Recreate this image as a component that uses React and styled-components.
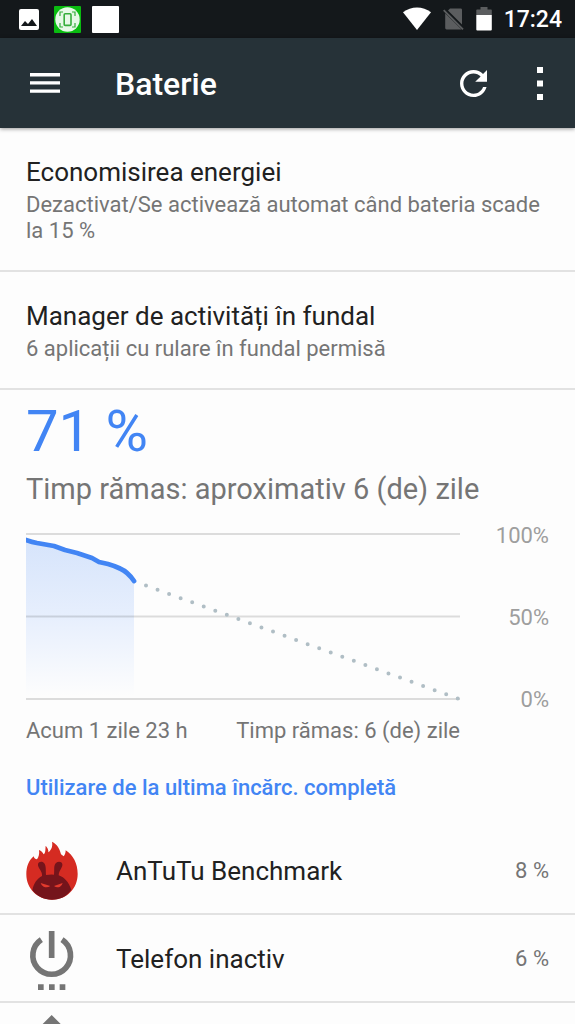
import React from "react";
import styled, { createGlobalStyle } from "styled-components";

const GlobalStyle = createGlobalStyle`
  * {
    box-sizing: border-box;
  }
  body {
    margin: 0;
    background: #fdfdfd;
    font-family: Roboto, "Noto Sans", sans-serif;
  }
  button {
    border: none;
    background: none;
    padding: 0;
    color: inherit;
    font: inherit;
    text-align: left;
    cursor: pointer;
  }
  svg {
    display: block;
  }
`;

const Screen = styled.div`
  height: 100vh;
  display: flex;
  flex-direction: column;
  overflow: hidden;
`;

const StatusBar = styled.div`
  flex: none;
  height: 38px;
  padding: 0 13px 0 16px;
  display: flex;
  align-items: center;
  justify-content: space-between;
  background: #14181b;
  color: #fff;
`;

const StatusGroup = styled.div`
  display: flex;
  align-items: center;
  gap: ${(props) => props.$gap}px;
`;

const Clock = styled.time`
  padding-top: 2px;
  font-size: 23px;
  font-weight: 500;
  line-height: 36px;
`;

const AppBar = styled.header`
  flex: none;
  z-index: 1;
  height: 90px;
  padding: 0 20px;
  display: flex;
  align-items: center;
  background: #263238;
  color: #fff;
  box-shadow: 0 1px 4px rgba(0, 0, 0, 0.4);
`;

const IconButton = styled.button`
  flex: none;
  width: ${(props) => props.$width || 50}px;
  height: 50px;
  display: grid;
  place-items: center;
`;

const Title = styled.h1`
  flex: 1;
  margin: 0;
  padding: 2px 0 0 45px;
  font-size: 32px;
  font-weight: 500;
  line-height: 36px;
`;

const Actions = styled.div`
  display: flex;
  gap: 27px;
`;

const Content = styled.main`
  flex: 1;
  min-height: 0;
  overflow-y: auto;
  scrollbar-width: none;
`;

const Preference = styled.button`
  display: block;
  width: 100%;
  padding: 28px 26px 26px;
  border-bottom: 2px solid #e2e2e2;
`;

const PreferenceTitle = styled.span`
  display: block;
  margin-bottom: 4px;
  color: #212121;
  font-size: 26px;
  line-height: 32px;
`;

const Summary = styled.span`
  display: block;
  color: #757575;
  font-size: 22px;
  line-height: 26px;
`;

const Battery = styled.section`
  padding: 9px 26px 0;
`;

const Level = styled.div`
  color: #4285f4;
  font-size: 58px;
  line-height: 64px;
`;

const Remaining = styled.div`
  margin-top: 10px;
  color: #757575;
  font-size: 29px;
  line-height: 32px;
`;

const Chart = styled.div`
  margin-top: 18px;
  display: grid;
  grid-template-columns: 1fr 89px;
`;

const Plot = styled.svg`
  width: 100%;
  height: auto;
`;

const Scale = styled.div`
  padding-bottom: 1px;
  display: flex;
  flex-direction: column;
  justify-content: space-between;
  color: #9e9e9e;
  font-size: 22px;
  line-height: 26px;
  text-align: right;
`;

const Period = styled.div`
  margin: 4px 89px 0 0;
  display: flex;
  justify-content: space-between;
  color: #757575;
  font-size: 22px;
  line-height: 26px;
`;

const Category = styled.h2`
  margin: 0;
  padding: 31px 26px 26px;
  color: #4285f4;
  font-size: 22px;
  font-weight: 500;
  line-height: 26px;
`;

const UsageList = styled.ul`
  margin: 0;
  padding: 0;
  list-style: none;
`;

const UsageItem = styled.button`
  width: 100%;
  padding: 11px 26px;
  display: flex;
  align-items: center;
  border-bottom: 2px solid #e2e2e2;
`;

const UsageName = styled.span`
  flex: 1;
  padding: 2px 0 0 38px;
  color: #212121;
  font-size: 26px;
  line-height: 32px;
`;

const Percent = styled.span`
  padding-top: 2px;
  color: #757575;
  font-size: 22px;
  line-height: 26px;
`;

const ImageIcon = () => (
  <svg width="27" height="27" viewBox="0 0 27 27">
    <rect x="3" y="3" width="20" height="21" rx="2" fill="#fff" />
    <path d="M5 20l4-5 3 3 4-5 5 7z" fill="#14181b" />
  </svg>
);

const CaptureIcon = () => (
  <svg width="27" height="27" viewBox="0 0 27 27">
    <rect width="27" height="27" rx="1" fill="#0abb10" />
    <circle cx="13.5" cy="13.5" r="12.2" fill="#e6f8e6" />
    <g fill="none" stroke="#35ad3b">
      <rect x="10.2" y="7.8" width="6.8" height="11.6" rx="1" strokeWidth="1.6" />
      <path
        d="M9 6H6v4M18 6h3v4M9 21H6v-4M18 21h3v-4"
        strokeWidth="1.2"
      />
    </g>
  </svg>
);

const BlankIcon = () => (
  <svg width="27" height="27" viewBox="0 0 27 27">
    <rect width="27" height="27" rx="1" fill="#fff" />
  </svg>
);

const WifiIcon = () => (
  <svg width="28" height="24" viewBox="0 0 28 24">
    <path d="M0 5.2C4 2 9 .4 14 .4S24 2 28 5.2L14 23z" fill="#fff" />
  </svg>
);

const NoSimIcon = () => (
  <svg width="21" height="22" viewBox="0 0 21 22">
    <path
      d="M7 0.4H17.6q1.4 0 1.4 1.4V16.6L5 2.6zM2.2 5.2L18.6 21.4H3.6q-1.4 0-1.4-1.4z"
      fill="#5b5d5f"
    />
    <path d="M.7 2.2L20 21.3" stroke="#5b5d5f" strokeWidth="1.8" />
  </svg>
);

const BatteryIcon = () => (
  <svg width="16" height="24" viewBox="0 0 16 24">
    <path d="M4.5 0h7v2.5H15q.8 0 .8.8V8H.3V3.3q0-.8.8-.8h3.4z" fill="#5b5d5f" />
    <path d="M.3 8h15.5v14.6q0 1-1 1H1.3q-1 0-1-1z" fill="#fff" />
  </svg>
);

const MenuIcon = () => (
  <svg width="30" height="20" viewBox="0 0 30 20" fill="#fff">
    <path d="M0 0h30v3.4H0zM0 8.2h30v3.4H0zM0 16.4h30v3.4H0z" />
  </svg>
);

const RefreshIcon = () => (
  <svg width="27" height="27" viewBox="4 4 16 16" fill="#fff">
    <path d="M17.65 6.35C16.2 4.9 14.21 4 12 4c-4.42 0-7.99 3.58-7.99 8s3.57 8 7.99 8c3.73 0 6.84-2.55 7.73-6h-2.08c-.82 2.33-3.04 4-5.65 4-3.31 0-6-2.69-6-6s2.69-6 6-6c1.66 0 3.14.69 4.22 1.78L13 11h7V4l-2.35 2.35z" />
  </svg>
);

const MoreIcon = () => (
  <svg width="6" height="33" viewBox="0 0 6 33" fill="#fff">
    <path d="M0 0h6v6H0zM0 13.5h6v6H0zM0 27h6v6H0z" />
  </svg>
);

const AntutuIcon = () => (
  <svg width="52" height="64" viewBox="48 24 156 192">
    <path
      d="M126 209C82 209 49 176 49 133C49 110 56 92 71 79C73 86 76 88 81 88C86 81 89 72 87 60C94 62 98 67 101 73C107 69 106 58 107 47C112 53 116 59 115 67C127 57 128 46 126 35C141 43 149 55 153 73L161 79C165 74 167 68 167 61C190 76 203 101 203 132C203 176 170 209 126 209z"
      fill="#d52b22"
    />
    <path
      d="M67 180C71 160 82 145 96 138C98 122 82 114 84 102C86 94 97 94 102 99C109 107 107 121 108 135Q125 132 132 134C134 118 130 107 138 99C144 93 155 94 157 102C159 112 146 122 146 136C164 142 176 157 184 179C171 198 151 209 126 209C101 209 80 198 67 180z"
      fill="#75141b"
    />
    <path d="M92 159L121 168Q112 174 101 170Q94 167 92 159zM158 159L132 168Q140 174 150 170Q156 167 158 159z" fill="#e23a2d" />
  </svg>
);

const IdleIcon = () => (
  <svg width="52" height="64" viewBox="48 18 156 192">
    <g fill="none" stroke="#757575">
      <path d="M94 59A56.5 56.5 0 1 0 156 59" strokeWidth="17" />
      <path d="M125 33V114" strokeWidth="17" />
    </g>
    <path d="M84 193h17v17H84zM117 193h17v17h-17zM149 193h17v17h-17z" fill="#757575" />
  </svg>
);

const DisplayIcon = () => (
  <svg width="52" height="64" viewBox="48 282 156 192">
    <path
      d="M125 285L159 319H187V347L217 377L187 407V435H159L125 469L91 435H63V407L33 377L63 347V319H91z"
      fill="#757575"
    />
    <circle cx="125" cy="377" r="38" fill="#fdfdfd" />
  </svg>
);

const apps = [
  { name: "AnTuTu Benchmark", percent: "8 %", icon: AntutuIcon },
  { name: "Telefon inactiv", percent: "6 %", icon: IdleIcon },
  { label: "Ecran", icon: DisplayIcon },
];

const BatteryChart = () => (
  <Chart>
    <Plot viewBox="0 0 434 191" role="img" aria-label="Nivelul bateriei">
      <defs>
        <linearGradient id="fill" x1="0" y1="0" x2="0" y2="1">
          <stop offset="0" stopColor="#d6e4fb" />
          <stop offset="0.5" stopColor="#e7effd" />
          <stop offset="1" stopColor="#fdfdfd" />
        </linearGradient>
      </defs>
      <path
        d="M0 17L11 20 28 23 39 27 51 30 66 35 73 39 82 41 94 45.5Q102 49 108 58V173H0z"
        fill="url(#fill)"
      />
      <path d="M0 11H434M0 93.5H434M0 176H434" stroke="#000" strokeOpacity="0.13" strokeWidth="2" />
      <path
        d="M120 62.6L432 175.6"
        stroke="#b0bec5"
        strokeWidth="4"
        strokeLinecap="round"
        strokeDasharray="0 12.28"
      />
      <path
        d="M0 17Q6 19 11 20L28 23 39 27 51 30 66 35 73 39 82 41Q89 43 94 45.5Q102 49 108 58"
        fill="none"
        stroke="#4285f4"
        strokeWidth="4.8"
        strokeLinecap="round"
        strokeLinejoin="round"
      />
    </Plot>
    <Scale>
      <span>100%</span>
      <span>50%</span>
      <span>0%</span>
    </Scale>
  </Chart>
);

const App = () => {
  return (
    <Screen>
      <GlobalStyle />
      <StatusBar>
        <StatusGroup $gap={11}>
          <ImageIcon />
          <CaptureIcon />
          <BlankIcon />
        </StatusGroup>
        <StatusGroup $gap={12}>
          <WifiIcon />
          <NoSimIcon />
          <BatteryIcon />
          <Clock>17:24</Clock>
        </StatusGroup>
      </StatusBar>
      <AppBar>
        <IconButton aria-label="Meniu">
          <MenuIcon />
        </IconButton>
        <Title>Baterie</Title>
        <Actions>
          <IconButton aria-label="Actualizați">
            <RefreshIcon />
          </IconButton>
          <IconButton $width={30} aria-label="Mai multe opțiuni">
            <MoreIcon />
          </IconButton>
        </Actions>
      </AppBar>
      <Content>
        <Preference>
          <PreferenceTitle>Economisirea energiei</PreferenceTitle>
          <Summary>
            Dezactivat/Se activează automat când bateria scade la 15 %
          </Summary>
        </Preference>
        <Preference>
          <PreferenceTitle>Manager de activități în fundal</PreferenceTitle>
          <Summary>6 aplicații cu rulare în fundal permisă</Summary>
        </Preference>
        <Battery>
          <Level>71 %</Level>
          <Remaining>Timp rămas: aproximativ 6 (de) zile</Remaining>
          <BatteryChart />
          <Period>
            <span>Acum 1 zile 23 h</span>
            <span>Timp rămas: 6 (de) zile</span>
          </Period>
        </Battery>
        <Category>Utilizare de la ultima încărc. completă</Category>
        <UsageList>
          {apps.map(({ name, label, percent, icon: Icon }) => (
            <li key={name || label}>
              <UsageItem aria-label={label}>
                <Icon />
                <UsageName>{name}</UsageName>
                <Percent>{percent}</Percent>
              </UsageItem>
            </li>
          ))}
        </UsageList>
      </Content>
    </Screen>
  );
};

export default App;
